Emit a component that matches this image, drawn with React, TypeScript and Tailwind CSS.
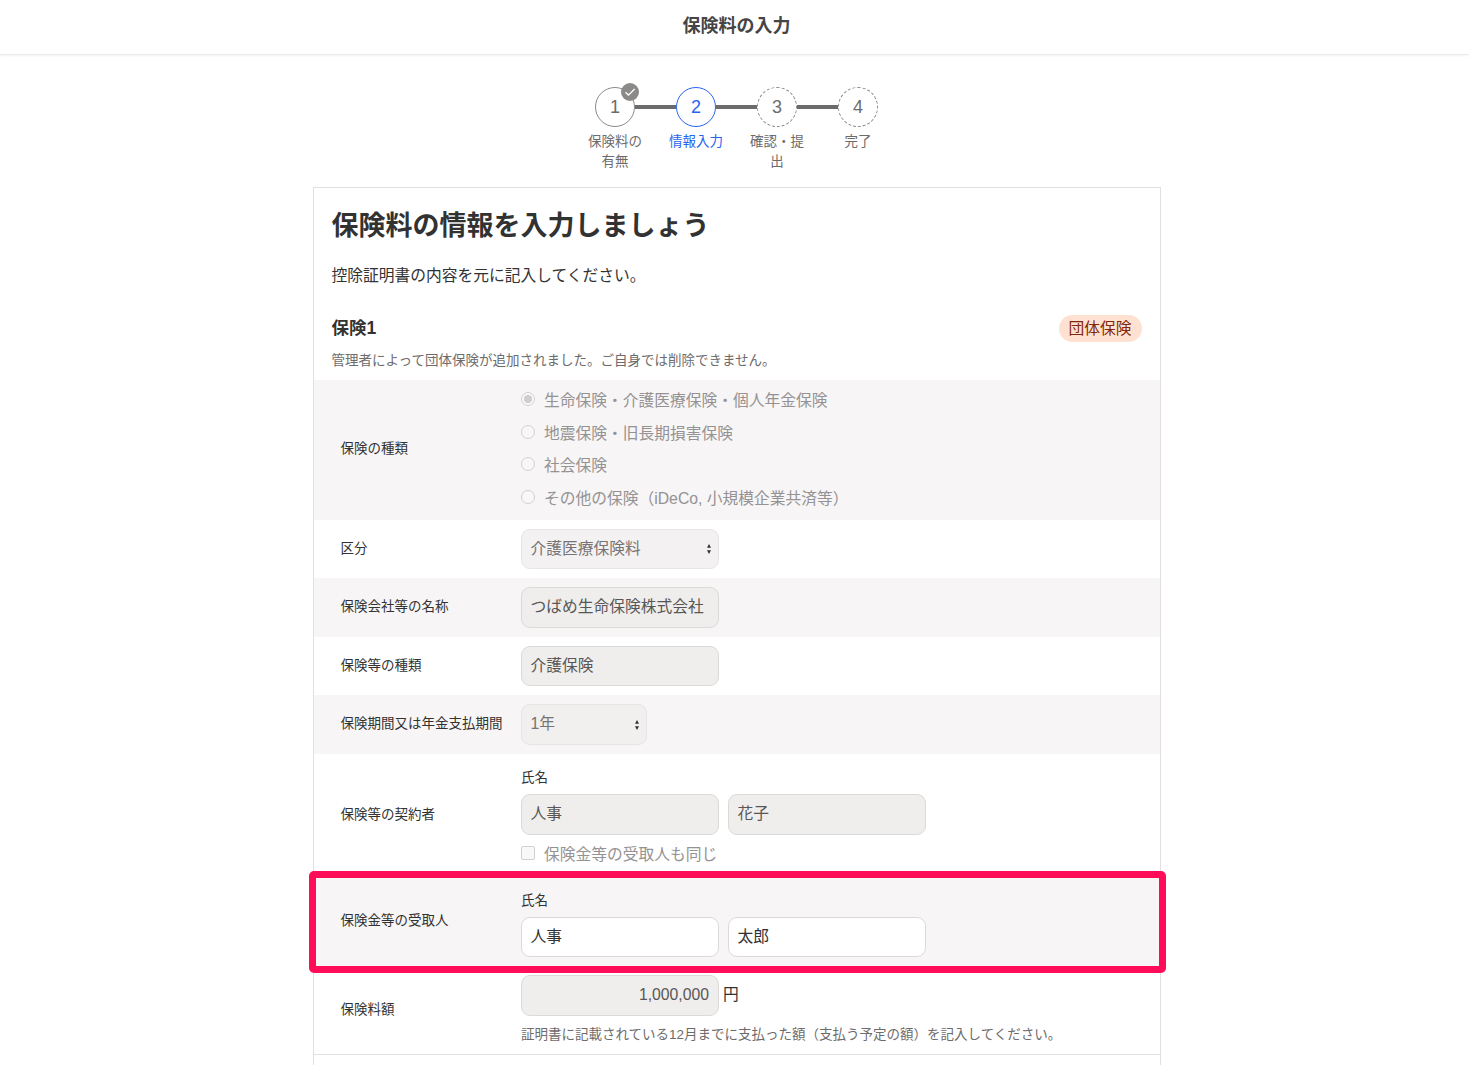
import { type ReactNode } from "react"
import clsx from "clsx"

const steps = [
  { label: "保険料の有無", state: "done" },
  { label: "情報入力", state: "current" },
  { label: "確認・提出", state: "todo" },
  { label: "完了", state: "todo" },
]

const insuranceTypes = [
  "生命保険・介護医療保険・個人年金保険",
  "地震保険・旧長期損害保険",
  "社会保険",
  "その他の保険（iDeCo, 小規模企業共済等）",
]

function Stepper() {
  return (
    <ol className="flex justify-center pt-8">
      {steps.map((step, index) => (
        <li key={step.label} className="w-[81px] flex flex-col items-center">
          <div className="w-full flex items-center">
            <span className={clsx("h-1 flex-1", index > 0 && "bg-[#6b6b6b]")} />
            <span
              className={clsx(
                "relative size-10 rounded-full border flex items-center justify-center text-lg",
                step.state === "done" && "border-[#8c8989] text-[#6e6b6b]",
                step.state === "current" && "border-[#2864f0] text-[#2864f0]",
                step.state === "todo" && "border-dashed border-[#8c8989] text-[#6e6b6b]",
              )}
            >
              {index + 1}
              {step.state === "done" && (
                <svg className="absolute -top-[5px] -right-[5px] size-[18px]" viewBox="0 0 18 18">
                  <circle cx="9" cy="9" r="9" fill="#8c8a88" />
                  <path d="M4.5 9.3 7.5 12.1 13.6 6" fill="none" stroke="#fff" strokeWidth="1.3" />
                </svg>
              )}
            </span>
            <span className={clsx("h-1 flex-1", index < steps.length - 1 && "bg-[#6b6b6b]")} />
          </div>
          <span
            className={clsx(
              "mt-[5px] w-[60px] text-center text-[13.5px] leading-5",
              step.state === "current" ? "text-[#2864f0]" : "text-[#6e6b6b]",
            )}
          >
            {step.label}
          </span>
        </li>
      ))}
    </ol>
  )
}

function Row(props: { label: string; className: string; children: ReactNode }) {
  return (
    <div className={clsx("flex items-center", props.className)}>
      <div className="w-[207px] shrink-0 pl-[26.5px] pb-px text-[13.5px] leading-5">{props.label}</div>
      <div className="flex-1 self-stretch pt-[9px]">{props.children}</div>
    </div>
  )
}

function Field(props: { value: string; disabled?: boolean; right?: boolean }) {
  return (
    <div
      className={clsx(
        "w-[198px] h-[40.5px] rounded-[9px] border border-[#dcdad9] pl-[8.5px] pr-[9px] pb-px flex items-center whitespace-nowrap",
        props.disabled ? "bg-[#efeeec] text-[#595756]" : "bg-white",
        props.right && "justify-end",
      )}
    >
      {props.value}
    </div>
  )
}

function SelectField(props: { value: string; className: string }) {
  return (
    <div
      className={clsx(
        "h-[40.5px] rounded-[9px] border border-[#e6e4e4] pl-[8.5px] pr-[6px] flex items-center justify-between text-[#767474]",
        props.className,
      )}
    >
      <span className="pb-px">{props.value}</span>
      <svg className="w-[6px] h-[10px]" viewBox="0 0 6 10" fill="#323232">
        <path d="M3 0 5 3.8H1zM3 10 1 6.2h4z" />
      </svg>
    </div>
  )
}

function NameFields(props: { last: string; first: string; disabled?: boolean }) {
  return (
    <div className="pt-[5.5px]">
      <div className="text-[13.5px] leading-5 mb-[6px]">氏名</div>
      <div className="flex gap-[9px]">
        <Field value={props.last} disabled={props.disabled} />
        <Field value={props.first} disabled={props.disabled} />
      </div>
    </div>
  )
}

export default function App() {
  return (
    <div className="h-[1065px] overflow-hidden bg-white text-[#323232] text-[15.75px] leading-6 font-['Liberation_Sans','Noto_Sans_CJK_JP',sans-serif]">
      <header className="h-[55px] pl-1 pb-[2px] flex items-center justify-center border-b border-[#ebebeb] shadow-[0_1px_2px_rgba(0,0,0,0.05)]">
        <h1 className="text-lg font-bold text-[#464444]">保険料の入力</h1>
      </header>
      <div className="pl-1 h-[132px]">
        <Stepper />
      </div>

      <main className="w-[848px] ml-[313px] h-[900px] border border-[#e1e0e0]">
        <div className="h-[192px] pl-[17.5px] pr-[18px] pt-5">
          <h2 className="text-[27px] leading-9 font-bold">保険料の情報を入力しましょう</h2>
          <p className="mt-5">控除証明書の内容を元に記入してください。</p>
          <div className="mt-[27px] h-[27px] flex items-center justify-between">
            <h3 className="pb-[2px] text-[17.5px] font-bold">保険1</h3>
            <span className="h-[27px] w-[83px] rounded-full bg-[#ffe1d2] text-[#82280a] flex items-center justify-center pr-px">
              団体保険
            </span>
          </div>
          <p className="mt-[9px] text-[13.5px] leading-5 text-[#6e6b6b]">
            管理者によって団体保険が追加されました。ご自身では削除できません。
          </p>
        </div>

        <Row label="保険の種類" className="h-[139.75px] bg-[#f7f5f6]">
          <ul className="-mt-[4.25px] text-[#949292]">
            {insuranceTypes.map((type, index) => (
              <li key={type} className="h-[32.5px] flex items-center">
                <span className="size-[14px] mb-[3.5px] mr-[9px] rounded-full border border-[#d2d0d0] bg-[#f9f8f8] flex items-center justify-center">
                  {index === 0 && <span className="size-2 rounded-full bg-[#cfcdcd]" />}
                </span>
                {type}
              </li>
            ))}
          </ul>
        </Row>
        <Row label="区分" className="h-[58.5px]">
          <SelectField value="介護医療保険料" className="w-[198px] bg-[#f3f1f2]" />
        </Row>
        <Row label="保険会社等の名称" className="h-[58.5px] bg-[#f7f5f6]">
          <Field value="つばめ生命保険株式会社" disabled />
        </Row>
        <Row label="保険等の種類" className="h-[58.5px]">
          <Field value="介護保険" disabled />
        </Row>
        <Row label="保険期間又は年金支払期間" className="h-[58.5px] bg-[#f7f5f6]">
          <SelectField value="1年" className="w-[126px] bg-[#f1f0ef]" />
        </Row>
        <Row label="保険等の契約者" className="h-[122.5px]">
          <NameFields last="人事" first="花子" disabled />
          <div className="mt-2 flex items-center text-[#949292]">
            <span className="size-[14px] mb-[3px] mr-[9px] rounded-[2px] border border-[#d2d0d0] bg-[#f9f8f8]" />
            保険金等の受取人も同じ
          </div>
        </Row>
        <div className="relative">
          <Row label="保険金等の受取人" className="h-[90px] bg-[#f7f5f6]">
            <NameFields last="人事" first="太郎" />
          </Row>
          <div className="absolute -top-[5px] -left-[5px] w-[857px] h-[102px] rounded-[5px] border-[7px] border-[#ff0d58]" />
        </div>
        <Row label="保険料額" className="h-[88.75px] border-b border-[#e1e0e0]">
          <div className="flex items-center gap-1">
            <Field value="1,000,000" disabled right />
            <span className="pb-[2px]">円</span>
          </div>
          <p className="mt-[9px] text-[13.5px] leading-5 text-[#6e6b6b]">
            証明書に記載されている12月までに支払った額（支払う予定の額）を記入してください。
          </p>
        </Row>
      </main>
    </div>
  )
}
